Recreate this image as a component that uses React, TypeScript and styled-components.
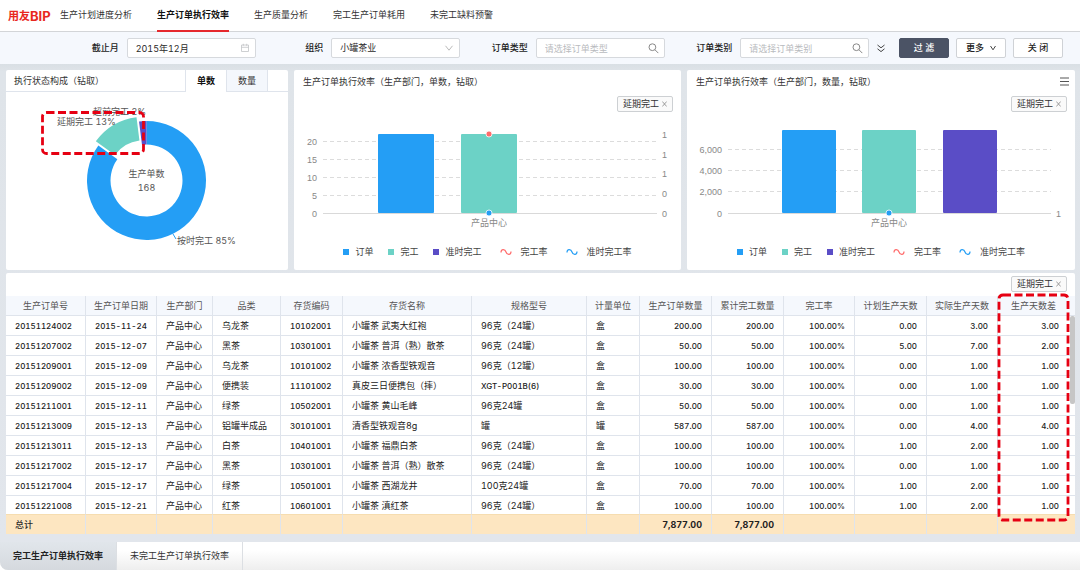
import React from "react";
import styled, { createGlobalStyle, css } from "styled-components";

const GlobalStyle = createGlobalStyle`
  *, *::before, *::after { box-sizing: border-box; }
  body {
    margin: 0;
    background: #fff;
    color: #2b2b2b;
    font-family: Inter, "Noto Sans CJK SC", sans-serif;
    font-size: 9px;
    font-variant-numeric: tabular-nums;
    line-height: 12px;
  }
  button, input, select { font: inherit; font-variant-numeric: inherit; color: inherit; margin: 0; }
  button { cursor: pointer; }
`;

const BLUE = "#249ef5";
const TEAL = "#6cd2c6";
const PURPLE = "#5a4dc6";
const CORAL = "#ff6b6b";
const RED = "#e60012";

const Page = styled.div`
  display: flex;
  flex-direction: column;
  min-height: 100vh;
`;

/* ---------- top navigation ---------- */

const Header = styled.header`
  display: flex;
  height: 32px;
  padding-left: 8px;
  border-bottom: 1px solid #d3d5d8;
  background: #fff;
`;

const Logo = styled.div`
  display: flex;
  align-items: center;
  width: 52px;
  color: #e8281e;
  font-size: 11px;
  font-weight: 700;
  white-space: nowrap;
`;

const LogoLatin = styled.span`
  font-size: 13px;
`;

const Nav = styled.nav`
  display: flex;
  gap: 25px;
`;

const NavLink = styled.a<{ $active?: boolean }>`
  display: flex;
  align-items: center;
  height: 32px;
  border-bottom: 2px solid ${(p) => (p.$active ? "#e5282d" : "transparent")};
  color: ${(p) => (p.$active ? "#111" : "#333")};
  font-weight: ${(p) => (p.$active ? 700 : 400)};
  text-decoration: none;
  white-space: nowrap;
`;

/* ---------- filter bar ---------- */

const FilterBar = styled.form`
  display: flex;
  align-items: center;
  height: 32px;
  padding: 0 17px 0 51px;
  background: #f5f8fd;
`;

const Fields = styled.div`
  display: grid;
  flex: 1;
  grid-template-columns: repeat(4, 1fr);
`;

const Field = styled.div`
  display: flex;
  align-items: center;
  justify-content: flex-end;
  gap: 8px;
`;

const FieldLabel = styled.label`
  color: #222;
  font-weight: 500;
  white-space: nowrap;
`;

const Control = styled.div`
  position: relative;
  width: 63%;

  svg {
    position: absolute;
    top: 5px;
    right: 6px;
    pointer-events: none;
  }
`;

const controlBox = css`
  display: block;
  width: 100%;
  height: 20px;
  padding: 0 20px 0 8px;
  border: 1px solid #d6d9dd;
  border-radius: 2px;
  background: #fff;
  appearance: none;
  outline: none;
`;

const TextInput = styled.input`
  ${controlBox}
  &::placeholder { color: #b9bbbe; opacity: 1; }
`;

const Select = styled.select`
  ${controlBox}
`;

const IconButton = styled.button`
  display: flex;
  padding: 0;
  border: 0;
  background: none;
`;

const ExpandButton = styled(IconButton)`
  margin: 0 14px 0 8px;
`;

const Buttons = styled.div`
  display: flex;
  gap: 7px;
`;

const Button = styled.button<{ $primary?: boolean }>`
  display: flex;
  align-items: center;
  justify-content: center;
  gap: 6px;
  width: 50px;
  height: 20px;
  padding: 0;
  border: 1px solid ${(p) => (p.$primary ? "#4b5365" : "#cfd2d6")};
  border-radius: 2px;
  background: ${(p) => (p.$primary ? "#4b5365" : "#fff")};
  color: ${(p) => (p.$primary ? "#fff" : "#222")};
  font-weight: 500;
  white-space: pre;
`;

/* ---------- panels ---------- */

const Main = styled.main`
  display: flex;
  flex: 1;
  flex-direction: column;
  gap: 3px;
  padding: 6px 5px 8px 6px;
  background: linear-gradient(#d9dfe4, #dfe4e9 8px, #e2e6ec);
`;

const ChartRow = styled.div`
  display: grid;
  grid-template-columns: 282fr 387fr 388fr;
  gap: 6px;
`;

const Card = styled.section`
  position: relative;
  min-width: 0;
  border-radius: 2px;
  background: #fff;
`;

const CardHead = styled.div`
  display: flex;
  align-items: center;
  justify-content: space-between;
  height: 23px;
  padding: 0 6px 0 9px;
`;

const CardTitle = styled.h2`
  margin: 0;
  color: #333;
  font-size: 9px;
  font-weight: 400;
  white-space: nowrap;
`;

const TabHead = styled.div`
  display: flex;
  height: 22px;
`;

const TabHeadTitle = styled.div`
  display: flex;
  flex: 1;
  align-items: center;
  padding-left: 8px;
  border-bottom: 1px solid #dfe4ec;
`;

const HeadTab = styled.button<{ $active?: boolean }>`
  width: 41px;
  padding: 0;
  border: solid #dfe4ec;
  border-width: 0 0 ${(p) => (p.$active ? 0 : 1)}px 1px;
  background: ${(p) => (p.$active ? "#fff" : "#f4f7fc")};
  color: ${(p) => (p.$active ? "#111" : "#333")};
  font-weight: ${(p) => (p.$active ? 700 : 400)};
`;

const HeadTabEnd = styled.div`
  width: 21px;
  border: solid #dfe4ec;
  border-width: 0 0 1px 1px;
`;

const TagRow = styled.div`
  display: flex;
  justify-content: flex-end;
  padding: 3px 8px 4px;
`;

const TagBox = styled.span`
  display: flex;
  align-items: center;
  gap: 3px;
  height: 16px;
  padding: 0 5px;
  border: 1px solid #cdd0d3;
  border-radius: 2px;
  background: #fafafa;
  color: #333;
  white-space: nowrap;
`;

const ChartSvg = styled.svg`
  display: block;
  width: 100%;
  height: auto;
  font-size: 9px;
`;

const AxisText = styled.text`
  fill: #888;
  font-family: "Liberation Sans", "Noto Sans CJK SC", sans-serif;
`;

const SliceText = styled.text`
  fill: #555;
`;

const ChartBody = styled.div`
  padding-top: 2px;
`;

const Legend = styled.ul`
  display: flex;
  align-items: center;
  justify-content: center;
  gap: 15px;
  height: 31px;
  margin: 0;
  padding: 0;
  list-style: none;
`;

const LegendItem = styled.li`
  display: flex;
  align-items: center;
  gap: 6px;
  color: #444;
  white-space: nowrap;
`;

const Swatch = styled.span<{ $color: string }>`
  width: 6px;
  height: 6px;
  background: ${(p) => p.$color};
`;

/* ---------- table ---------- */

const TableScroll = styled.div`
  position: relative;
  height: 238px;
  overflow: hidden;
`;

const Table = styled.table`
  width: 100%;
  table-layout: fixed;
  border-collapse: separate;
  border-spacing: 0;

  th, td {
    height: 20px;
    padding: 0 9px;
    border: solid #dfe4ec;
    border-width: 0 1px 1px 0;
    overflow: hidden;
    white-space: nowrap;
  }
  th:last-child, td:last-child {
    padding-right: 16px;
    border-right: 0;
  }
  thead th {
    padding: 0;
    background: #f5f8fd;
    color: #555;
    font-weight: 400;
    text-align: center;
  }
  thead th:last-child { padding-right: 6px; }
  tfoot th, tfoot td {
    position: sticky;
    bottom: 0;
    border-top: 1px solid #f6ddb0;
    border-bottom: 0;
    background: #fde6c1;
    font-size: 9px;
    font-weight: 700;
  }
  tfoot th { font-weight: 500; text-align: left; }
`;

const Cell = styled.td<{ $number?: boolean; $digits?: boolean }>`
  color: #222;
  font-size: ${(p) => (p.$digits ? 8 : 9)}px;
  font-weight: ${(p) => (p.$digits ? 500 : 400)};
  text-align: ${(p) => (p.$number ? "right" : "left")};
`;

const ScrollThumb = styled.div`
  position: absolute;
  top: 20px;
  right: 0;
  width: 5px;
  height: 88px;
  border-radius: 2px;
  background: #c6c6c6;
`;

const ColumnMark = styled.svg`
  position: absolute;
  top: 21px;
  right: 6px;
  width: 71px;
  height: 227px;
  overflow: visible;
  pointer-events: none;
`;

/* ---------- bottom tabs ---------- */

const Footer = styled.footer`
  display: flex;
  height: 28px;
  border-radius: 0 0 0 8px;
  background: linear-gradient(#fff 30%, #eeeeee);
  overflow: hidden;
`;

const FooterTab = styled.button<{ $active?: boolean }>`
  padding: 0 13px;
  border: 0;
  border-right: 1px solid #dcdfe3;
  background: ${(p) => (p.$active ? "linear-gradient(#e1e6eb, #d5d9de)" : "transparent")};
  color: ${(p) => (p.$active ? "#222" : "#333")};
  font-weight: ${(p) => (p.$active ? 700 : 400)};
  white-space: nowrap;
`;

/* ---------- icons ---------- */

const CalendarIcon = () => (
  <svg width="10" height="10" viewBox="0 0 10 10" fill="none" stroke="#c2c4c7">
    <path d="M1.5 2h7v6.5h-7zM1.5 4.3h7M3.3 .8v2M6.7 .8v2" strokeWidth=".8" />
  </svg>
);

const ChevronDown = ({ color = "#bbb" }: { color?: string }) => (
  <svg width="10" height="10" viewBox="0 0 10 10" fill="none" stroke={color}>
    <path d="M1.5 2.8 5 7.2 8.5 2.8" />
  </svg>
);

const MoreChevron = () => (
  <svg width="6" height="6" viewBox="0 0 6 6" fill="none" stroke="#444">
    <path d="M.5 1 3 4.8 5.5 1" />
  </svg>
);

const SearchIcon = () => (
  <svg width="11" height="11" viewBox="0 0 11 11" fill="none" stroke="#888">
    <circle cx="4.4" cy="4.2" r="3.4" />
    <path d="m6.9 6.7 3.4 3.4" />
  </svg>
);

const DoubleChevron = () => (
  <svg width="8" height="9" viewBox="0 0 8 9" fill="none" stroke="#444">
    <path d="M.5 1 4 3.8 7.5 1M.5 4.8 4 7.6l3.5-2.8" />
  </svg>
);

const CloseIcon = () => (
  <svg width="5" height="6" viewBox="0 0 5 6" fill="none" stroke="#888" strokeWidth=".8">
    <path d="m.3.5 4.4 5M4.7.5l-4.4 5" />
  </svg>
);

const MenuIcon = () => (
  <svg width="9" height="9" viewBox="0 0 9 9" stroke="#555">
    <path d="M0 1h9M0 4.5h9M0 8h9" />
  </svg>
);

const WaveIcon = ({ color }: { color: string }) => (
  <svg width="18" height="8" viewBox="0 0 18 8" fill="none" stroke={color} strokeWidth="1.2">
    <path d="M4 4.5C4 .8 8 .8 9 4s5 3.200 5-.5" />
  </svg>
);

/* ---------- pieces ---------- */

const Tag = () => (
  <TagBox>
    延期完工
    <IconButton type="button" aria-label="移除延期完工">
      <CloseIcon />
    </IconButton>
  </TagBox>
);

const CX = 140.5;
const CY = 88.5;

function ringSlice(from: number, to: number, shift = 0) {
  const outer = 59.5;
  const inner = 36;
  const rad = (deg: number) => (deg * Math.PI) / 180;
  const mid = rad((from + to) / 2);
  const ox = CX + shift * Math.sin(mid);
  const oy = CY - shift * Math.cos(mid);
  const at = (r: number, deg: number) =>
    `${(ox + r * Math.sin(rad(deg))).toFixed(2)} ${(oy - r * Math.cos(rad(deg))).toFixed(2)}`;
  const large = to - from > 180 ? 1 : 0;
  return `M${at(outer, from)}A${outer} ${outer} 0 ${large} 1 ${at(outer, to)}L${at(inner, to)}A${inner} ${inner} 0 ${large} 0 ${at(inner, from)}Z`;
}

const StatusDonut = () => (
  <ChartSvg viewBox="0 0 282 178">
    <path d={ringSlice(0, 306)} fill={BLUE} />
    <path d={ringSlice(306, 352.8, 5)} fill={TEAL} />
    <path d={ringSlice(352.8, 360)} fill={PURPLE} />
    <path d="m167 142 3 5" stroke={BLUE} />
    <SliceText x="87" y="23">超前完工 2%</SliceText>
    <SliceText x="51" y="33">延期完工 13%</SliceText>
    <SliceText x="171" y="152">按时完工 85%</SliceText>
    <SliceText x={CX} y="85" textAnchor="middle">生产单数</SliceText>
    <SliceText x={CX} y="99" textAnchor="middle">168</SliceText>
    <rect x="36.500" y="20.500" width="101" height="41" rx="4" fill="none" stroke={RED} strokeWidth="2.800" strokeDasharray="8 3.500" />
  </ChartSvg>
);

type Tick = { y: number; label: string };
type BarChartProps = {
  width: number;
  x1: number;
  x2: number;
  ticks: Tick[];
  rightTicks: Tick[];
  bars: { x: number; color: string }[];
  barWidth: number;
  barTop: number;
  center: number;
  topDot?: boolean;
};

const BASE = 95;

const BarChart = (p: BarChartProps) => (
  <ChartSvg viewBox={`0 0 ${p.width} 118`}>
    {p.ticks.map((t) => (
      <g key={t.label}>
        {t.y !== BASE && (
          <path d={`M${p.x1} ${t.y}.5H${p.x2}`} stroke="#dcdcdc" strokeDasharray="4 3" />
        )}
        <AxisText x={p.x1 - 6} y={t.y + 4} textAnchor="end">{t.label}</AxisText>
      </g>
    ))}
    {p.rightTicks.map((t) => (
      <AxisText key={t.y} x={p.x2 + 5} y={t.y + 4}>{t.label}</AxisText>
    ))}
    <path d={`M${p.x1} ${BASE}.5H${p.x2}`} stroke="#d9d9d9" />
    {p.bars.map((b) => (
      <rect key={b.x} x={b.x} y={p.barTop} width={p.barWidth} height={BASE - p.barTop} rx="1" fill={b.color} />
    ))}
    {p.topDot && <circle cx={p.center} cy={p.barTop} r="3" fill={CORAL} stroke="#fff" strokeWidth=".8" />}
    <circle cx={p.center} cy={BASE} r="3" fill={BLUE} stroke="#fff" strokeWidth=".8" />
    <AxisText x={p.center} y="108" textAnchor="middle">产品中心</AxisText>
  </ChartSvg>
);

const ChartLegend = () => (
  <Legend>
    <LegendItem><Swatch $color={BLUE} />订单</LegendItem>
    <LegendItem><Swatch $color={TEAL} />完工</LegendItem>
    <LegendItem><Swatch $color={PURPLE} />准时完工</LegendItem>
    <LegendItem><WaveIcon color={CORAL} />完工率</LegendItem>
    <LegendItem><WaveIcon color={BLUE} />准时完工率</LegendItem>
  </Legend>
);

/* ---------- data ---------- */

const columns: [string, number][] = [
  ["生产订单号", 80],
  ["生产订单日期", 71],
  ["生产部门", 56],
  ["品类", 68],
  ["存货编码", 62],
  ["存货名称", 129],
  ["规格型号", 115],
  ["计量单位", 53],
  ["生产订单数量", 72],
  ["累计完工数量", 72],
  ["完工率", 71],
  ["计划生产天数", 72],
  ["实际生产天数", 71],
  ["生产天数差", 77],
];

const rows = [
  ["20151124002", "2015-11-24", "产品中心", "乌龙茶", "10102001", "小罐茶 武夷大红袍", "96克（24罐）", "盒", "200.00", "200.00", "100.00%", "0.00", "3.00", "3.00"],
  ["20151207002", "2015-12-07", "产品中心", "黑茶", "10301001", "小罐茶 普洱（熟）散茶", "96克（24罐）", "盒", "50.00", "50.00", "100.00%", "5.00", "7.00", "2.00"],
  ["20151209001", "2015-12-09", "产品中心", "乌龙茶", "10101002", "小罐茶 浓香型铁观音", "96克（12罐）", "盒", "100.00", "100.00", "100.00%", "0.00", "1.00", "1.00"],
  ["20151209002", "2015-12-09", "产品中心", "便携装", "11101002", "真皮三日便携包（摔）", "XGT-P001B(6)", "盒", "30.00", "30.00", "100.00%", "0.00", "1.00", "1.00"],
  ["20151211001", "2015-12-11", "产品中心", "绿茶", "10502001", "小罐茶 黄山毛峰", "96克24罐", "盒", "50.00", "50.00", "100.00%", "0.00", "1.00", "1.00"],
  ["20151213009", "2015-12-13", "产品中心", "铝罐半成品", "30101001", "清香型铁观音8g", "罐", "罐", "587.00", "587.00", "100.00%", "0.00", "4.00", "4.00"],
  ["20151213011", "2015-12-13", "产品中心", "白茶", "10401001", "小罐茶 福鼎白茶", "96克（24罐）", "盒", "100.00", "100.00", "100.00%", "1.00", "2.00", "1.00"],
  ["20151217002", "2015-12-17", "产品中心", "黑茶", "10301001", "小罐茶 普洱（熟）散茶", "96克（24罐）", "盒", "100.00", "100.00", "100.00%", "0.00", "1.00", "1.00"],
  ["20151217004", "2015-12-17", "产品中心", "绿茶", "10501001", "小罐茶 西湖龙井", "100克24罐", "盒", "70.00", "70.00", "100.00%", "1.00", "2.00", "1.00"],
  ["20151221008", "2015-12-21", "产品中心", "红茶", "10601001", "小罐茶 滇红茶", "96克（24罐）", "盒", "100.00", "100.00", "100.00%", "1.00", "2.00", "1.00"],
];

const totals = ["", "", "", "", "", "", "", "7,877.00", "7,877.00", "", "", "", ""];

const isDigits = (value: string) => /^[\x20-\x7e]+$/.test(value);

export default function App() {
  return (
    <Page lang="zh-CN">
      <GlobalStyle />
      <Header>
        <Logo>用友<LogoLatin>BIP</LogoLatin></Logo>
        <Nav>
          <NavLink href="#progress">生产计划进度分析</NavLink>
          <NavLink href="#efficiency" $active>生产订单执行效率</NavLink>
          <NavLink href="#quality">生产质量分析</NavLink>
          <NavLink href="#consumption">完工生产订单耗用</NavLink>
          <NavLink href="#shortage">未完工缺料预警</NavLink>
        </Nav>
      </Header>

      <FilterBar onSubmit={(e) => e.preventDefault()}>
        <Fields>
          <Field>
            <FieldLabel htmlFor="month">截止月</FieldLabel>
            <Control><TextInput id="month" defaultValue="2015年12月" /><CalendarIcon /></Control>
          </Field>
          <Field>
            <FieldLabel htmlFor="org">组织</FieldLabel>
            <Control>
              <Select id="org"><option>小罐茶业</option></Select>
              <ChevronDown />
            </Control>
          </Field>
          <Field>
            <FieldLabel htmlFor="type">订单类型</FieldLabel>
            <Control><TextInput id="type" placeholder="请选择订单类型" /><SearchIcon /></Control>
          </Field>
          <Field>
            <FieldLabel htmlFor="category">订单类别</FieldLabel>
            <Control><TextInput id="category" placeholder="请选择订单类别" /><SearchIcon /></Control>
          </Field>
        </Fields>
        <ExpandButton type="button" aria-label="展开"><DoubleChevron /></ExpandButton>
        <Buttons>
          <Button type="submit" $primary>过 滤</Button>
          <Button type="button">更多<MoreChevron /></Button>
          <Button type="button">关 闭</Button>
        </Buttons>
      </FilterBar>

      <Main>
        <ChartRow>
          <Card>
            <TabHead>
              <TabHeadTitle><CardTitle>执行状态构成（钻取）</CardTitle></TabHeadTitle>
              <HeadTab type="button" $active>单数</HeadTab>
              <HeadTab type="button">数量</HeadTab>
              <HeadTabEnd />
            </TabHead>
            <StatusDonut />
          </Card>

          <Card>
            <CardHead><CardTitle>生产订单执行效率（生产部门，单数，钻取）</CardTitle></CardHead>
            <TagRow><Tag /></TagRow>
            <ChartBody>
              <BarChart
                width={387}
                x1={29}
                x2={363}
                ticks={[
                  { y: 23, label: "20" },
                  { y: 41, label: "15" },
                  { y: 59, label: "10" },
                  { y: 77, label: "5" },
                  { y: BASE, label: "0" },
                ]}
                rightTicks={[
                  { y: 16, label: "1" },
                  { y: 36, label: "1" },
                  { y: 55, label: "1" },
                  { y: 75, label: "0" },
                  { y: BASE, label: "0" },
                ]}
                bars={[{ x: 84, color: BLUE }, { x: 167, color: TEAL }]}
                barWidth={56}
                barTop={16}
                center={195}
                topDot
              />
              <ChartLegend />
            </ChartBody>
          </Card>

          <Card>
            <CardHead>
              <CardTitle>生产订单执行效率（生产部门，数量，钻取）</CardTitle>
              <IconButton type="button" aria-label="菜单"><MenuIcon /></IconButton>
            </CardHead>
            <TagRow><Tag /></TagRow>
            <ChartBody>
              <BarChart
                width={388}
                x1={41}
                x2={364}
                ticks={[
                  { y: 31, label: "6,000" },
                  { y: 52, label: "4,000" },
                  { y: 73, label: "2,000" },
                  { y: BASE, label: "0" },
                ]}
                rightTicks={[{ y: BASE, label: "1" }]}
                bars={[{ x: 95, color: BLUE }, { x: 175, color: TEAL }, { x: 256, color: PURPLE }]}
                barWidth={54}
                barTop={12}
                center={202}
              />
              <ChartLegend />
            </ChartBody>
          </Card>
        </ChartRow>

        <Card>
          <TagRow><Tag /></TagRow>
          <TableScroll>
            <Table>
              <colgroup>
                {columns.map(([name, width]) => <col key={name} width={width} />)}
              </colgroup>
              <thead>
                <tr>{columns.map(([name]) => <th key={name} scope="col">{name}</th>)}</tr>
              </thead>
              <tbody>
                {rows.map((row) => (
                  <tr key={row[0]}>
                    {row.map((value, i) => (
                      <Cell key={i} $number={i > 7} $digits={isDigits(value)}>{value}</Cell>
                    ))}
                  </tr>
                ))}
              </tbody>
              <tfoot>
                <tr>
                  <th scope="row">总计</th>
                  {totals.map((value, i) => <Cell key={i} $number>{value}</Cell>)}
                </tr>
              </tfoot>
            </Table>
            <ScrollThumb />
          </TableScroll>
          <ColumnMark>
            <rect x="1" y="1" width="69" height="225" rx="4" fill="none" stroke={RED} strokeWidth="2.800" strokeDasharray="8 3.500" />
          </ColumnMark>
        </Card>
      </Main>

      <Footer>
        <FooterTab type="button" $active>完工生产订单执行效率</FooterTab>
        <FooterTab type="button">未完工生产订单执行效率</FooterTab>
      </Footer>
    </Page>
  );
}
